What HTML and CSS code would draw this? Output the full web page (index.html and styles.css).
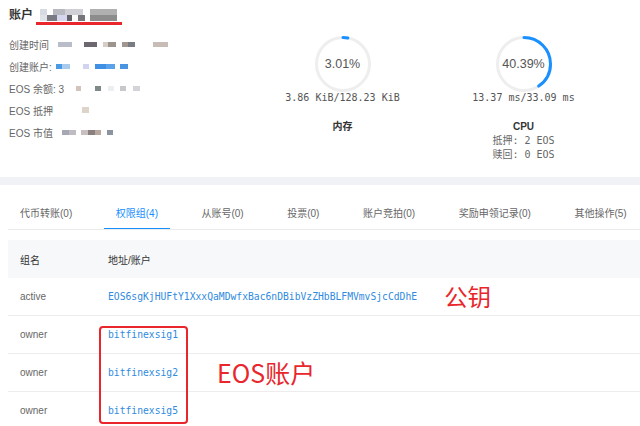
FILE: index.html
```html
<!DOCTYPE html>
<html lang="zh-CN">
<head>
    <meta charset="UTF-8">
    <meta name="viewport" content="width=device-width, initial-scale=1.0">
    <title>账户</title>
    <link rel="stylesheet" href="styles.css">
</head>
<body>
    <div class="summary">
        <div class="info">
            <div class="title">
                <span>账户</span>
                <span class="name"><span class="name-blur"></span></span>
            </div>
            <div class="line"><span>创建时间</span><span class="blur b-time"></span></div>
            <div class="line"><span>创建账户:</span><span class="blur b-creator"></span></div>
            <div class="line"><span>EOS 余额: 3</span><span class="blur b-balance"></span></div>
            <div class="line"><span>EOS 抵押</span><span class="blur b-stake"></span></div>
            <div class="line"><span>EOS 市值</span><span class="blur b-value"></span></div>
        </div>

        <div class="stats">
            <div class="stat">
                <div class="ring">
                    <svg width="56" height="56" viewBox="0 0 56 56">
                        <circle class="track" cx="28" cy="28" r="26.5"/>
                        <circle class="arc" cx="28" cy="28" r="26.5" stroke-dasharray="5 200" transform="rotate(-90 28 28)"/>
                    </svg>
                    <span class="pct">3.01%</span>
                </div>
                <div class="usage">3.86 KiB/128.23 KiB</div>
                <div class="stat-name">内存</div>
            </div>
            <div class="stat">
                <div class="ring">
                    <svg width="56" height="56" viewBox="0 0 56 56">
                        <circle class="track" cx="28" cy="28" r="26.5"/>
                        <circle class="arc" cx="28" cy="28" r="26.5" stroke-dasharray="67.2 200" transform="rotate(-90 28 28)"/>
                    </svg>
                    <span class="pct">40.39%</span>
                </div>
                <div class="usage">13.37 ms/33.09 ms</div>
                <div class="stat-name">CPU</div>
                <div class="stat-sub">抵押: 2 EOS</div>
                <div class="stat-sub">赎回: 0 EOS</div>
            </div>
        </div>
    </div>

    <div class="band"></div>

    <div class="panel">
        <div class="tabs">
            <span class="tab">代币转账(0)</span>
            <span class="tab active">权限组(4)</span>
            <span class="tab">从账号(0)</span>
            <span class="tab">投票(0)</span>
            <span class="tab">账户竞拍(0)</span>
            <span class="tab">奖励申领记录(0)</span>
            <span class="tab">其他操作(5)</span>
        </div>

        <div class="table">
            <div class="row head">
                <div class="cell group">组名</div>
                <div class="cell">地址/账户</div>
            </div>
            <div class="row">
                <div class="cell group">active</div>
                <div class="cell"><a class="link">EOS6sgKjHUFtY1XxxQaMDwfxBac6nDBibVzZHbBLFMVmvSjcCdDhE</a><span class="note key-note">公钥</span></div>
            </div>
            <div class="row">
                <div class="cell group">owner</div>
                <div class="cell"><a class="link">bitfinexsig1</a></div>
            </div>
            <div class="row">
                <div class="cell group">owner</div>
                <div class="cell"><a class="link">bitfinexsig2</a></div>
            </div>
            <div class="row">
                <div class="cell group">owner</div>
                <div class="cell"><a class="link">bitfinexsig5</a></div>
            </div>

            <div class="mark-box"></div>
            <span class="note mark-label">EOS账户</span>
        </div>
    </div>
</body>
</html>
```

FILE: styles.css
```css
body {
    margin: 0;
    font-family: "Liberation Sans", "Noto Sans CJK SC", sans-serif;
    color: #666;
    background: #fff;
    overflow: hidden;
}

.summary {
    display: flex;
    height: 177px;
}

.info {
    width: 252px;
    padding: 8px 0 0 9px;
    box-sizing: border-box;
    font-size: 10px;
}

.title {
    display: flex;
    align-items: flex-start;
    font-size: 12px;
    font-weight: bold;
    line-height: 14px;
    color: #333;
    margin-bottom: 8px;
}

.name {
    display: inline-block;
    margin: 1px 0 0 3px;
    padding: 0 5px 1px 4px;
    border-bottom: 3px solid #e8262b;
}

.name-blur {
    display: block;
    width: 77px;
    height: 12px;
    background:
        linear-gradient(to right, #d6dae2 0 7px, #fff 7px 13px, #b8b8c0 13px 25px, #cfcfd5 25px 43px, #fff 43px 50px, #b0b0b0 50px) top / 100% 6px no-repeat,
        linear-gradient(to right, #e0e2ea 0 7px, #7a7a82 7px 17px, #d6d6ee 17px 27px, #626268 27px 32px, #fafafa 32px 38px, #75757b 38px 45px, #fff 45px 50px, #8c8c8c 50px) bottom / 100% 6px no-repeat;
}

.line {
    display: flex;
    align-items: center;
    height: 22px;
}

.blur {
    display: inline-block;
    height: 5px;
}

.b-time {
    width: 110px;
    margin-left: 9px;
    background: linear-gradient(to right, #b9bdc9 0 14px, #fff 14px 26px, #6d6870 26px 39px, #fff 39px 45px, #d6cec6 45px 50px, #9b958e 50px 58px, #fff 58px 64px, #a09890 64px 70px, #7a7c84 70px 77px, #fff 77px 95px, #c7bcb6 95px);
}

.b-creator {
    width: 72px;
    margin-left: 4px;
    background: linear-gradient(to right, #4a9ae6 0 6px, #a8cbee 6px 14px, #fff 14px 27px, #d0d4f0 27px 33px, #fff 33px 39px, #3f8fe4 39px 50px, #5aa2ea 50px 59px, #fff 59px 64px, #4a94e2 64px);
}

.b-balance {
    width: 64px;
    margin-left: 12px;
    background: linear-gradient(to right, #d2c4bc 0 5px, #fff 5px 19px, #7f8a88 19px 25px, #fff 25px 32px, #eceef2 32px 38px, #fff 38px 44px, #c8c8cc 44px 50px, #fff 50px 57px, #d4d4d8 57px);
}

.b-stake {
    width: 7px;
    height: 6px;
    margin-left: 29px;
    background: #ddd4ca;
}

.b-value {
    width: 51px;
    margin-left: 9px;
    background: linear-gradient(to right, #a8a8b4 0 7px, #c0bcc4 7px 14px, #fff 14px 19px, #c8c0c0 19px 26px, #8a8080 26px 33px, #b8a8a0 33px 39px, #fff 39px 45px, #8c94a0 45px);
}

.stats {
    display: flex;
}

.stat {
    width: 181px;
    display: flex;
    flex-direction: column;
    align-items: center;
    padding-top: 36px;
}

.ring {
    position: relative;
    width: 56px;
    height: 56px;
}

.ring svg {
    display: block;
}

.track {
    fill: none;
    stroke: #eeeeee;
    stroke-width: 3;
}

.arc {
    fill: none;
    stroke: #1890ff;
    stroke-width: 3;
    stroke-linecap: round;
}

.pct {
    position: absolute;
    inset: 0;
    display: flex;
    align-items: center;
    justify-content: center;
    font-size: 12.5px;
    color: #555;
}

.usage, .stat-sub {
    font-family: "DejaVu Sans Mono", "Noto Sans CJK SC", monospace;
    font-size: 10px;
    line-height: 12px;
    color: #555;
}

.stat-name {
    margin-top: 16px;
    font-size: 10px;
    font-weight: bold;
    line-height: 14px;
    color: #333;
}

.stat-sub {
    line-height: 14px;
    color: #666;
}

.band {
    height: 8px;
    background: #f0f2f5;
}

.panel {
    padding: 22px 0 0 8px;
}

.tabs {
    display: flex;
    gap: 19.5px;
    border-bottom: 1px solid #ebebeb;
    overflow: hidden;
}

.tab {
    flex: none;
    white-space: nowrap;
    padding: 0 12px 7px;
    margin-bottom: -1px;
    font-size: 10px;
    line-height: 14px;
    color: #666;
    border-bottom: 2px solid transparent;
}

.tab.active {
    color: #1890ff;
    border-bottom-color: #1890ff;
}

.table {
    position: relative;
    margin-top: 10px;
    font-size: 10px;
}

.row {
    display: flex;
    align-items: center;
    height: 38px;
    box-sizing: border-box;
    border-bottom: 1px solid #ededed;
}

.row.head {
    background: #f7f8fa;
    border-bottom: none;
    color: #333;
}

.cell {
    display: flex;
    align-items: center;
    padding-left: 12px;
}

.cell.group {
    width: 76px;
}

.link {
    font-family: "DejaVu Sans Mono", monospace;
    font-size: 9.7px;
    color: #2f8ae0;
}

.note {
    color: #e8262b;
    font-family: "Noto Sans CJK SC", sans-serif;
    line-height: 1;
}

.key-note {
    margin-left: 27px;
    font-size: 23.5px;
}

.mark-box {
    position: absolute;
    left: 91px;
    top: 86px;
    width: 89px;
    height: 98px;
    box-sizing: border-box;
    border: 2px solid #e8262b;
    border-radius: 4px;
}

.mark-label {
    position: absolute;
    left: 209px;
    top: 120px;
    font-size: 25px;
}
```
